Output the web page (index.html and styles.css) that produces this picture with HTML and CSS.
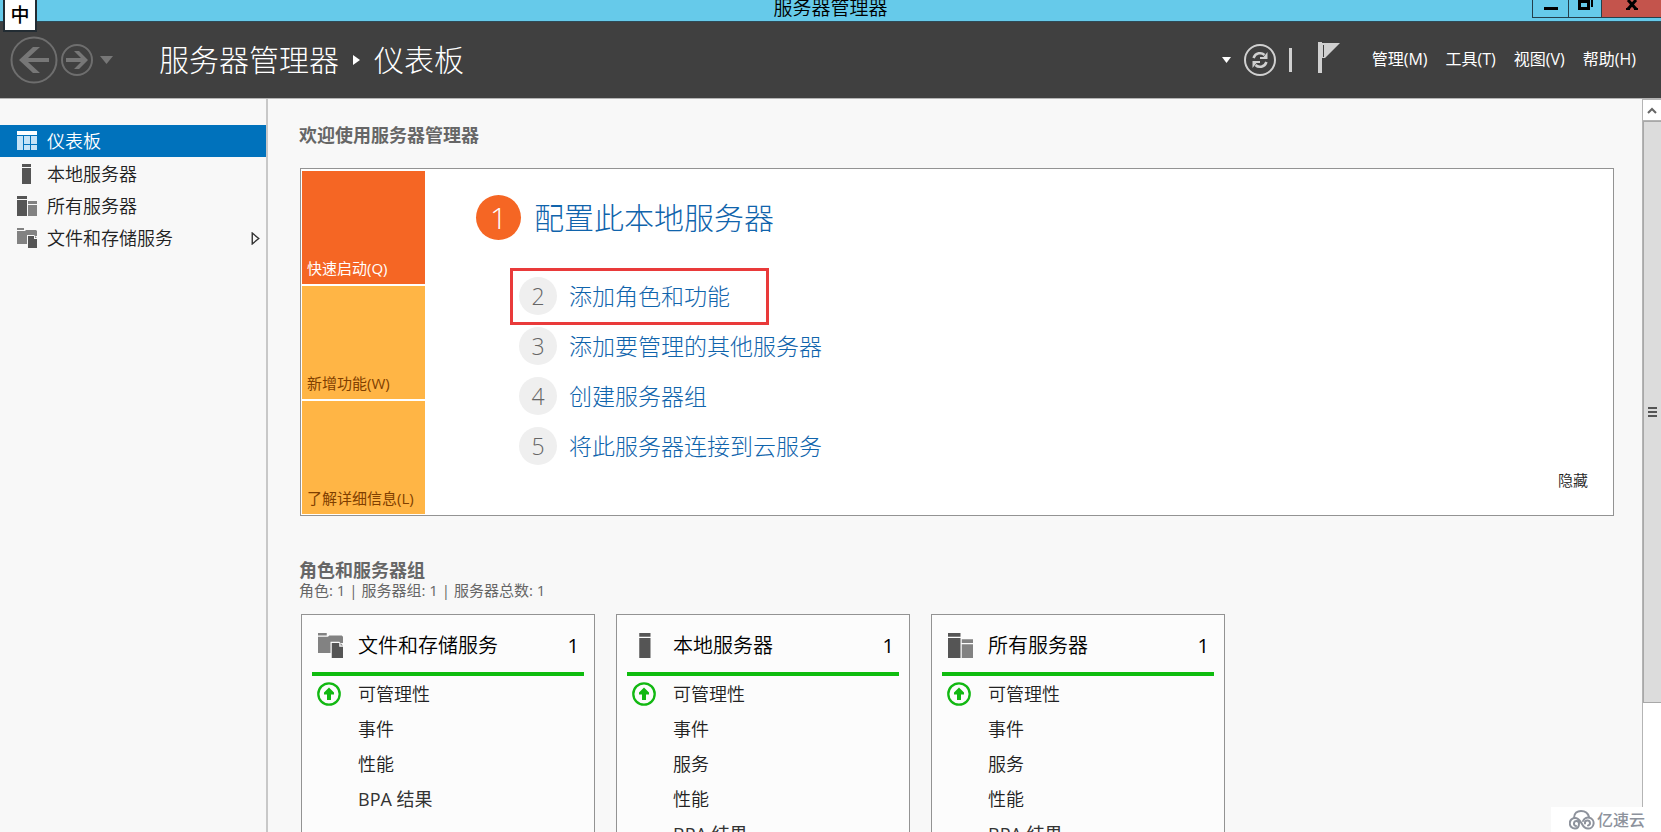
FILE: index.html
```html
<!DOCTYPE html>
<html lang="zh-CN">
<head>
<meta charset="utf-8">
<title>服务器管理器</title>
<link rel="stylesheet" href="styles.css">
</head>
<body>
<svg class="defs" aria-hidden="true">
  <symbol id="i-dash" viewBox="0 0 20 20"><path fill="#fff" d="M0 0h20v4H0z"/><path fill="#c5e3f7" d="M0 5h6v14H0zM7 5h6v8H7zM14 5h6v8h-6zM7 14h6v5H7zM14 14h6v5h-6z"/></symbol>
  <symbol id="i-local" viewBox="0 0 20 20"><path fill="#555" d="M5 0h9v3H5zM5 4h9v16H5z"/></symbol>
  <symbol id="i-all" viewBox="0 0 20 20"><path fill="#555" d="M0 0h10v3H0zM0 4h10v16H0z"/><path fill="#828282" d="M11 5h9v3h-9zM11 9h9v11h-9z"/></symbol>
  <symbol id="i-files" viewBox="0 0 20 20"><path fill="#828282" d="M0 0h7v2H0zM0 3h8l1-1h10l1 1v5h-2l-1-1h-7v9H0z"/><path fill="#555" d="M11 8h6v3h3v9h-9z"/><path fill="#828282" d="M18 8l2 2h-2z"/></symbol>
  <symbol id="i-up" viewBox="0 0 24 24"><circle cx="12" cy="12" r="10.7" fill="none" stroke="#12b812" stroke-width="2.3"/><path fill="#12b812" d="M12 5.500l5 5v2h-3V18h-4v-5.500H7v-2z"/></symbol>
</svg>

<header class="titlebar">
  <span class="titlebar-text">服务器管理器</span>
  <div class="win-buttons">
    <button class="win-btn" aria-label="最小化"><svg width="16" height="16"><path d="M1 11h14v3H1z"/></svg></button>
    <button class="win-btn win-restore" aria-label="还原"><svg width="18" height="16"><path fill="none" stroke="#000" stroke-width="3" d="M3.500 5.500h9v7h-9z"/><path d="M6 0h11v11h-2V1H6z"/></svg></button>
    <button class="win-btn win-close" aria-label="关闭"><svg width="14" height="16"><path fill="none" stroke="#000" stroke-width="3" d="M3 0l8 9M11 0L3 9"/><path d="M1 8h4v2H1zM9 8h4v2H9z"/></svg></button>
  </div>
  <span class="ime">中</span>
</header>

<div class="toolbar">
  <div class="history">
    <button class="plain" aria-label="后退"><svg width="48" height="48" viewBox="0 0 48 48"><circle cx="24" cy="24" r="22.500" fill="none" stroke="#6e6e6e" stroke-width="2"/><path fill="#777" d="M9 24l14-13h7L18 22h21v4H18l12 11h-7z"/></svg></button>
    <button class="plain" aria-label="前进"><svg width="34" height="34" viewBox="0 0 34 34"><circle cx="17" cy="17" r="15" fill="none" stroke="#6e6e6e" stroke-width="2"/><path fill="#777" d="M28 17l-9 9h-5l7-7H6v-4h15l-7-7h5z"/></svg></button>
    <button class="plain" aria-label="历史记录"><svg width="13" height="8"><path fill="#777" d="M0 0h13L6.500 8z"/></svg></button>
  </div>
  <h1 class="crumbs"><span>服务器管理器</span><svg width="7" height="12"><path fill="#fff" d="M0 1l7 5-7 5z"/></svg><span>仪表板</span></h1>
  <div class="tools">
    <button class="plain" aria-label="更多"><svg width="9" height="6"><path fill="#fff" d="M0 0h9L4.500 6z"/></svg></button>
    <button class="plain" aria-label="刷新"><svg width="34" height="34" viewBox="0 0 34 34"><circle cx="17" cy="17" r="15" fill="none" stroke="#d0d0d0" stroke-width="2"/><g fill="none" stroke="#d0d0d0" stroke-width="2.500"><path d="M10.500 15c2-5.500 8-6 11-3"/><path d="M23.500 19c-2 5.500-8 6-11 3"/></g><path fill="#d0d0d0" d="M24.500 9v7H17v-2h3.500zM9.500 25v-7H17v2h-3.500z"/></svg></button>
    <span class="divider"></span>
    <button class="plain flag" aria-label="通知"><svg width="22" height="31"><path fill="#d0d0d0" d="M0 0h4v31H0zM4 1h18L7 16H4z"/><path stroke="#404040" d="M5.500 3v12"/></svg></button>
  </div>
  <nav class="menu">
    <button class="plain">管理(M)</button>
    <button class="plain">工具(T)</button>
    <button class="plain">视图(V)</button>
    <button class="plain">帮助(H)</button>
  </nav>
</div>

<div class="body">
  <nav class="side">
    <a class="side-link active" href="#"><svg><use href="#i-dash"/></svg>仪表板</a>
    <a class="side-link" href="#"><svg><use href="#i-local"/></svg>本地服务器</a>
    <a class="side-link" href="#"><svg><use href="#i-all"/></svg>所有服务器</a>
    <a class="side-link" href="#"><svg><use href="#i-files"/></svg>文件和存储服务<svg class="expand" viewBox="0 0 8 12"><path fill="none" stroke="#333" stroke-width="1.300" d="M1 1l6 5-6 5z"/></svg></a>
  </nav>

  <main class="main">
    <h2 class="heading">欢迎使用服务器管理器</h2>
    <section class="welcome">
      <div class="tiles">
        <button class="tile tile-active">快速启动(Q)</button>
        <button class="tile">新增功能(W)</button>
        <button class="tile">了解详细信息(L)</button>
      </div>
      <div class="steps">
        <a class="step-main" href="#"><span class="num num-main">1</span>配置此本地服务器</a>
        <a class="step marked" href="#"><span class="num">2</span>添加角色和功能</a>
        <a class="step" href="#"><span class="num">3</span>添加要管理的其他服务器</a>
        <a class="step" href="#"><span class="num">4</span>创建服务器组</a>
        <a class="step" href="#"><span class="num">5</span>将此服务器连接到云服务</a>
      </div>
      <button class="plain hide">隐藏</button>
    </section>

    <h2 class="heading groups">角色和服务器组</h2>
    <p class="summary">角色: 1 | 服务器组: 1 | 服务器总数: 1</p>
    <div class="cards">
      <section class="card">
        <h3 class="card-head"><svg><use href="#i-files"/></svg><span>文件和存储服务</span><span class="count">1</span></h3>
        <ul class="card-list"><li><svg><use href="#i-up"/></svg>可管理性</li><li>事件</li><li>性能</li><li class="bpa">BPA 结果</li></ul>
      </section>
      <section class="card">
        <h3 class="card-head"><svg><use href="#i-local"/></svg><span>本地服务器</span><span class="count">1</span></h3>
        <ul class="card-list"><li><svg><use href="#i-up"/></svg>可管理性</li><li>事件</li><li>服务</li><li>性能</li><li class="bpa">BPA 结果</li></ul>
      </section>
      <section class="card">
        <h3 class="card-head"><svg><use href="#i-all"/></svg><span>所有服务器</span><span class="count">1</span></h3>
        <ul class="card-list"><li><svg><use href="#i-up"/></svg>可管理性</li><li>事件</li><li>服务</li><li>性能</li><li class="bpa">BPA 结果</li></ul>
      </section>
    </div>
  </main>

  <div class="scroll">
    <button class="scroll-up" aria-label="向上滚动"><svg width="10" height="7"><path fill="none" stroke="#666" stroke-width="2" d="M1 6l4-4 4 4"/></svg></button>
    <div class="thumb"><svg width="9" height="10"><path fill="#555" d="M0 0h9v2H0zM0 4h9v2H0zM0 8h9v2H0z"/></svg></div>
    <div class="track"></div>
  </div>
</div>

<div class="brand"><svg width="26" height="20" viewBox="0 0 26 20"><g fill="none" stroke="#8d929c" stroke-width="2" stroke-linecap="round"><path d="M5 8C5 3 8.500 1 12 1s7 2 8 6"/><path d="M10 13.500a2.500 2.500 0 1 0-3 2.500M10 13.500C10 17 8.500 18.500 6 18.500a5 5 0 0 1 0-10.500c4 0 5 3 7 6 1.500 3 3.500 4.500 6 4.500a5.500 5.500 0 1 0-5-7.500"/><path d="M16 13.500a2.500 2.500 0 1 1 3 2"/></g></svg>亿速云</div>
</body>
</html>
```

FILE: styles.css
```css
* { box-sizing: border-box; }

body {
  margin: 0;
  height: 100vh;
  overflow: hidden;
  display: flex;
  flex-direction: column;
  background: #f8f8f8;
  color: #222;
  font-family: "Open Sans", "Noto Sans CJK SC", sans-serif;
  font-size: 18px;
  font-weight: 350;
}

h1, h2, h3, p, ul { margin: 0; padding: 0; font-weight: inherit; }
ul { list-style: none; }
a { color: inherit; text-decoration: none; }
svg { display: block; flex: none; }
button { font: inherit; color: inherit; border-radius: 0; }
.defs { position: absolute; width: 0; height: 0; }
.plain { border: 0; padding: 0; background: none; }

/* Title bar */
.titlebar {
  position: relative;
  flex: none;
  height: 21px;
  display: flex;
  justify-content: center;
  background: #66caea;
}
.titlebar-text { font-size: 19px; line-height: 16px; color: #000; }
.win-buttons { position: absolute; top: 0; right: 0; height: 18px; display: flex; }
.win-btn {
  width: 36px;
  padding: 0;
  display: flex;
  justify-content: center;
  border: 1px solid #24404c;
  border-top: 0;
  border-right: 0;
  background: none;
  overflow: hidden;
}
.win-restore { width: 33px; }
.win-close { width: 60px; background: #c4544c; }
.win-btn svg { margin-top: -4px; }
.win-close svg { margin-top: 0; }
.ime {
  position: absolute;
  left: 3px;
  top: 0;
  z-index: 2;
  width: 34px;
  height: 32px;
  border: 2px solid #222c33;
  border-top: 0;
  background: #fff;
  color: #000;
  font-size: 19px;
  font-weight: 500;
  line-height: 30px;
  text-align: center;
}

/* Toolbar */
.toolbar {
  flex: none;
  height: 77px;
  padding: 0 25px 0 10px;
  display: flex;
  align-items: center;
  border-top: 1px solid #2f4a56;
  background: #404040;
  color: #fff;
}
.history { display: flex; align-items: center; gap: 2px; }
.history button:last-child { margin-left: 4px; }
.crumbs {
  margin-left: 46px;
  display: flex;
  align-items: center;
  gap: 14px;
  font-size: 30px;
  font-weight: 300;
  line-height: 40px;
}
.tools { margin-left: auto; display: flex; align-items: center; gap: 12px; }
.divider { width: 3px; height: 24px; background: #d0d0d0; }
.flag { margin: 0 0 6px 14px; }
.menu { margin-left: 32px; padding-bottom: 2px; display: flex; gap: 18px; font-size: 16px; font-weight: 400; line-height: 20px; }

/* Page body */
.body {
  flex: 1;
  min-height: 0;
  display: flex;
  border-top: 1px solid #b4b4b4;
}
.side {
  flex: none;
  width: 268px;
  padding-top: 26px;
  display: flex;
  flex-direction: column;
  border-right: 2px solid #c8c8c8;
}
.side-link {
  height: 32px;
  padding: 0 6px 0 17px;
  display: flex;
  align-items: center;
  gap: 10px;
  line-height: 24px;
}
.side-link svg { width: 20px; height: 20px; }
.side-link .expand { width: 9px; height: 13px; margin-left: auto; }
.active { margin-bottom: 1px; background: #0072bc; color: #fff; }

.main { flex: 1; min-width: 0; padding: 24px 28px 0 31px; }
.heading { font-size: 18px; font-weight: 700; line-height: 24px; color: #666; }

.welcome {
  margin: 21px 0 0 1px;
  padding: 2px 1px 1px;
  display: flex;
  border: 1px solid #939393;
  background: #fff;
}
.tiles { flex: none; width: 123px; display: grid; gap: 2px; }
.tile {
  height: 113px;
  padding: 0 4px 5px 5px;
  display: flex;
  align-items: flex-end;
  border: 0;
  background: #ffb545;
  color: #7f3f00;
  font-size: 15px;
  font-weight: 400;
  line-height: 22px;
  white-space: nowrap;
}
.tile-active { background: #f56624; color: #fff; }

.steps { flex: 1; padding: 24px 0 0 51px; display: flex; flex-direction: column; align-items: flex-start; color: #1064ac; font-weight: 300; }
.step-main { display: flex; align-items: center; gap: 13px; font-size: 30px; line-height: 44px; }
.step {
  height: 50px;
  margin-left: 34px;
  padding: 0 36px 0 6px;
  display: flex;
  align-items: center;
  gap: 12px;
  border: 3px solid transparent;
  font-size: 23px;
  line-height: 30px;
}
.marked { height: 57px; margin-top: 28px; margin-bottom: -4px; padding-bottom: 2px; border-color: #e93a3a; }
.num {
  width: 38px;
  height: 38px;
  border-radius: 50%;
  background: #efefef;
  color: #666;
  line-height: 38px;
  text-align: center;
}
.num-main { width: 45px; height: 45px; background: #f56624; color: #fff; line-height: 45px; }
.hide { align-self: flex-end; margin: 0 24px 23px 0; font-size: 15px; line-height: 22px; }

.groups { margin-top: 43px; line-height: 22px; }
.summary { color: #666; font-size: 15px; font-weight: 400; line-height: 18px; }
.cards { margin-top: 15px; padding-left: 2px; display: flex; gap: 21px; }
.card { width: 294px; padding: 0 10px 12px; border: 1px solid #939393; background: #fcfcfc; }
.card-head {
  height: 61px;
  padding: 4px 5px 0 6px;
  display: flex;
  align-items: center;
  gap: 15px;
  border-bottom: 4px solid #0fbc0f;
  color: #000;
  font-size: 20px;
  line-height: 28px;
}
.card-head svg { width: 25px; height: 25px; }
.count { margin-left: auto; font-weight: 400; }
.card-list li {
  height: 35px;
  padding-left: 46px;
  display: flex;
  align-items: center;
  line-height: 24px;
}
.card-list svg { width: 24px; height: 24px; margin: 0 17px 0 -41px; }
.card-list .bpa { font-weight: 400; color: #333; }

/* Scroll bar */
.scroll { flex: none; width: 19px; display: flex; flex-direction: column; border-left: 1px solid #b4b4b4; background: #fff; }
.scroll-up {
  height: 22px;
  padding: 0;
  display: flex;
  align-items: center;
  justify-content: center;
  border: 1px solid #b4b4b4;
  border-width: 1px 0;
  background: #fff;
}
.thumb {
  flex: 582;
  display: flex;
  align-items: center;
  justify-content: center;
  border: 1px solid #a8a8a8;
  border-right: 0;
  background: #dcdcdc;
}
.track { flex: 129; }

.brand {
  position: absolute;
  right: 0;
  bottom: 0;
  height: 25px;
  padding: 0 16px 0 18px;
  display: flex;
  align-items: center;
  gap: 2px;
  background: #fff;
  color: #8d929c;
  font-size: 16px;
  font-weight: 500;
  line-height: 22px;
}
```
